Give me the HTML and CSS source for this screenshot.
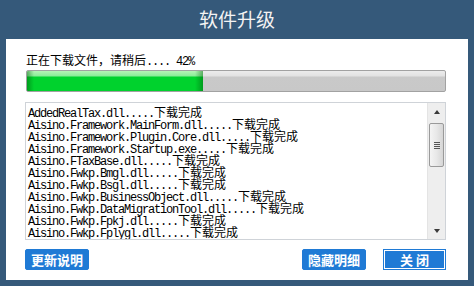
FILE: index.html
```html
<!DOCTYPE html>
<html lang="zh-CN">
<head>
<meta charset="utf-8">
<title>软件升级</title>
<link rel="stylesheet" href="styles.css">
</head>
<body>
<div class="window">
  <div class="titlebar">软件升级</div>
  <div class="panel">
    <div class="status"><span class="cn">正在下载文件，请稍后</span><span class="mono">.... 42%</span></div>
    <div class="progress"><div class="fill" style="width:42%"></div></div>
    <div class="listbox">
      <div class="lines">
        <div class="line">AddedRealTax.dll.....<span class="cn">下载完成</span></div>
        <div class="line">Aisino.Framework.MainForm.dll.....<span class="cn">下载完成</span></div>
        <div class="line">Aisino.Framework.Plugin.Core.dll.....<span class="cn">下载完成</span></div>
        <div class="line">Aisino.Framework.Startup.exe.....<span class="cn">下载完成</span></div>
        <div class="line">Aisino.FTaxBase.dll.....<span class="cn">下载完成</span></div>
        <div class="line">Aisino.Fwkp.Bmgl.dll.....<span class="cn">下载完成</span></div>
        <div class="line">Aisino.Fwkp.Bsgl.dll.....<span class="cn">下载完成</span></div>
        <div class="line">Aisino.Fwkp.BusinessObject.dll.....<span class="cn">下载完成</span></div>
        <div class="line">Aisino.Fwkp.DataMigrationTool.dll.....<span class="cn">下载完成</span></div>
        <div class="line">Aisino.Fwkp.Fpkj.dll.....<span class="cn">下载完成</span></div>
        <div class="line">Aisino.Fwkp.Fplygl.dll.....<span class="cn">下载完成</span></div>
      </div>
      <div class="scrollbar">
        <div class="sb-btn"><span class="arrow-up"></span></div>
        <div class="sb-track">
          <div class="thumb"><span class="grip"></span><span class="grip"></span><span class="grip"></span><span class="grip"></span></div>
        </div>
        <div class="sb-btn"><span class="arrow-down"></span></div>
      </div>
    </div>
    <div class="buttons">
      <button class="btn">更新说明</button>
      <div class="spacer"></div>
      <button class="btn">隐藏明细</button>
      <button class="btn btn-default">关 闭</button>
    </div>
  </div>
</div>
</body>
</html>
```

FILE: styles.css
```css
html, body {
  margin: 0;
  padding: 0;
}
body {
  width: 474px;
  height: 286px;
  background: #35597a;
  font-family: "Noto Sans CJK SC", "Liberation Sans", sans-serif;
  overflow: hidden;
}
.window {
  display: flex;
  flex-direction: column;
  height: 286px;
}
.titlebar {
  height: 39px;
  line-height: 38px;
  text-align: center;
  color: #f3f3f3;
  font-size: 19px;
}
.panel {
  margin: 0 6px;
  height: 241px;
  background: #ffffff;
  padding: 0 22px 0 19px;
  box-sizing: border-box;
  display: flex;
  flex-direction: column;
}
.status {
  margin-top: 14px;
  margin-left: 1px;
  height: 14px;
  line-height: 14px;
  font-size: 12px;
  color: #000;
  white-space: nowrap;
}
.cn {
  font-family: "Noto Sans CJK SC", sans-serif;
  font-size: 12px;
  letter-spacing: 0;
}
.mono {
  font-family: "Liberation Mono", monospace;
  font-size: 12px;
  letter-spacing: -1.2px;
}
.progress {
  margin-top: 3px;
  margin-left: 1px;
  height: 22px;
  box-sizing: border-box;
  border: 1px solid #a2a2a2;
  border-radius: 2px;
  background: linear-gradient(to bottom, #ececec 0, #e2e2e2 5px, #c9c9c9 6px, #c8c8c8 100%);
  overflow: hidden;
  display: flex;
}
.fill {
  height: 100%;
  background:
    linear-gradient(to right, rgba(0, 90, 10, 0.45) 0, rgba(0, 90, 10, 0) 7px, rgba(0, 90, 10, 0) calc(100% - 8px), rgba(0, 90, 10, 0.45) 100%),
    linear-gradient(to bottom, #b6f4b6 0, #8aec98 5px, #00d22d 6px, #00d22d 100%);
}
.listbox {
  margin-top: 10px;
  height: 138px;
  box-sizing: border-box;
  border: 1px solid #cfd3d8;
  display: flex;
}
.lines {
  flex: 1;
  overflow: hidden;
  padding: 3px 0 0 2px;
  font-family: "Liberation Mono", monospace;
  font-size: 12px;
  letter-spacing: -1.2px;
  color: #000;
}
.line {
  height: 12px;
  line-height: 12px;
  white-space: nowrap;
}
.line .cn {
  font-size: 12px;
  line-height: 12px;
}
.scrollbar {
  width: 17px;
  display: flex;
  flex-direction: column;
  background: #eeeeee;
  border-left: 1px solid #e4e4e4;
}
.sb-btn {
  height: 17px;
  display: flex;
  align-items: center;
  justify-content: center;
}
.arrow-up {
  width: 0;
  height: 0;
  border-left: 3.5px solid transparent;
  border-right: 3.5px solid transparent;
  border-bottom: 4px solid #3a3a3a;
}
.arrow-down {
  width: 0;
  height: 0;
  border-left: 3.5px solid transparent;
  border-right: 3.5px solid transparent;
  border-top: 4px solid #3a3a3a;
}
.sb-track {
  flex: 1;
  padding-top: 3px;
  display: flex;
  flex-direction: column;
  align-items: center;
}
.thumb {
  width: 15px;
  height: 44px;
  box-sizing: border-box;
  border: 1px solid #9a9a9a;
  border-radius: 2px;
  background: linear-gradient(to right, #f4f4f4 0, #e8e8e8 50%, #d6d6d6 100%);
  display: flex;
  flex-direction: column;
  align-items: center;
  justify-content: center;
  gap: 1px;
}
.grip {
  display: block;
  width: 6px;
  height: 1px;
  background: #555;
}
.buttons {
  margin-top: 9px;
  display: flex;
  align-items: flex-start;
}
.spacer {
  flex: 1;
}
.btn {
  width: 64px;
  height: 21px;
  margin: 0;
  padding: 0;
  border: 1px solid #1f7ad5;
  border-radius: 2px;
  background: #1f7ad5;
  color: #ffffff;
  font-family: "Noto Sans CJK SC", sans-serif;
  font-size: 13px;
  font-weight: bold;
  line-height: 19px;
  text-align: center;
}
.btn + .btn {
  margin-left: 17px;
}
.btn-default {
  width: 63px;
  border-radius: 0;
  box-shadow: inset 0 0 0 1px #ffffff;
  border-color: #1f7ad5;
}
```
